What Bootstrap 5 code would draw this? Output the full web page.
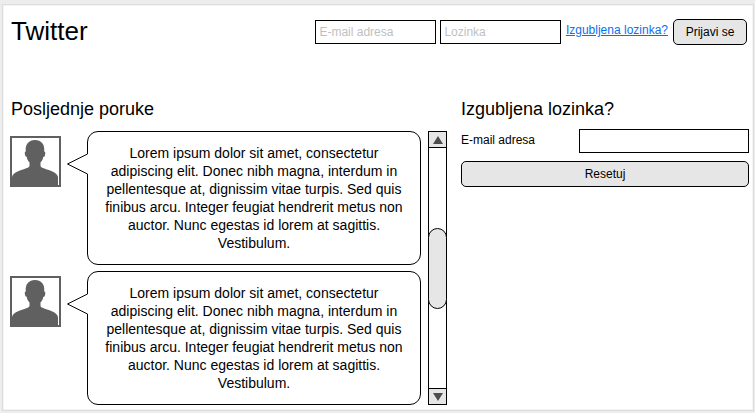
<!DOCTYPE html>
<html lang="bs">
<head>
<meta charset="utf-8">
<meta name="viewport" content="width=device-width, initial-scale=1">
<title>Twitter</title>
<link href="https://cdn.jsdelivr.net/npm/bootstrap@5.3.0/dist/css/bootstrap.min.css" rel="stylesheet">
<style>
body{font-family:"Liberation Sans",Arial,sans-serif;font-size:12px;line-height:18px;color:#000;background:#ededed;height:413px;overflow:hidden;padding:4px 1px 2px 2px}
.sheet{height:407px;background:#fff;border:1px solid #ddd;box-shadow:inset 0 0 0 1px #f4f4f4;padding:0 4px 0 7px}
.topbar{height:89px;padding-top:15px;padding-right:2px}
.brand{font-size:26px;line-height:30px;padding:0 0 0 1px;margin-top:-4px}
.field{font-size:12px;line-height:18px;height:24px;padding:2px 3.5px;border:1px solid #000;border-radius:0;box-shadow:none;color:#000}
.field::placeholder{color:#bfbfbf;opacity:1}
.login{width:121px}
.forgot{font-size:12px;color:#0a70ee;line-height:18px;margin:1px 1px 0 1px}
.key{font-size:12px;line-height:18px;height:26px;padding:3px 0;border:1px solid #000;border-radius:5px;background:#e6e6e6;color:#000}
.signin{width:74px;margin-top:-1px}
.heading{font-size:18px;line-height:22px;margin:0 0 11px 1px}
.feed{width:411px;gap:6px}
.bubble{width:334px;height:134px;border:1px solid #000;border-radius:11px;padding-top:12px;font-size:14px;line-height:18px}
.tail{position:absolute;left:-21px;top:21px}
.avatar{margin-top:5px}
.scroller{width:19px;height:274px;margin-left:7px;border:1px solid #000}
.arrow{height:16px;background:#e6e6e6}
.arrow-up{border-bottom:1px solid #000}
.arrow-down{border-top:1px solid #000}
.thumb{height:81px;margin:80px -1px 0;border:1px solid #000;border-radius:9.5px;background:#e6e6e6}
.reset{width:288px}
.side{margin-left:14px}
.side .heading{margin:0 0 9px}
.side .field{width:170px}
.caption-text{padding-bottom:2px}
</style>
</head>
<body>
<main class="sheet">
<header class="topbar d-flex align-items-start justify-content-between">
<h1 class="brand fw-normal mb-0">Twitter</h1>
<form class="d-flex align-items-start gap-1">
<input class="form-control field login" type="email" placeholder="E-mail adresa">
<input class="form-control field login" type="password" placeholder="Lozinka">
<a class="forgot text-decoration-underline text-nowrap" href="#">Izgubljena lozinka?</a>
<button class="btn key signin" type="button">Prijavi se</button>
</form>
</header>
<div class="d-flex align-items-start">
<section>
<h2 class="heading fw-normal pt-1">Posljednje poruke</h2>
<div class="d-flex">
<div class="feed d-flex flex-column">
<article class="d-flex justify-content-between align-items-start">
<svg class="avatar" width="51" height="51" viewBox="0 0 51 51"><path d="M1 1H50V50H1Z" fill="#fff" stroke="#606060" stroke-width="2"/><path d="M2 50V41C3 37 8 35 13 33.5C17 32 19.500 31.500 19.500 29.500V26.500C18 25 17 23 16.800 21C15.500 21 14.500 18.500 14.800 16.500C15 15.500 15.500 15.500 15.800 15.500C15 8 19 4 25 4C31 4 35 8 34.200 15.500C35.200 15.500 35.500 16.500 35.200 18C35 20 34.500 21 33.200 21C33 23 32 25 30.500 26.500V29.500C30.500 31.500 33 32 37 33.500C42 35 47 37 48 41V50Z" fill="#606060"/></svg>
<div class="bubble position-relative text-center"><svg class="tail" width="22" height="22" viewBox="0 0 22 22"><path d="M20 1H21V21H20Z" fill="#fff"/><path d="M20.500 1L.500 11L20.500 21" fill="#fff" stroke="#000"/></svg>Lorem ipsum dolor sit amet, consectetur<br>adipiscing elit. Donec nibh magna, interdum in<br>pellentesque at, dignissim vitae turpis. Sed quis<br>finibus arcu. Integer feugiat hendrerit metus non<br>auctor. Nunc egestas id lorem at sagittis.<br>Vestibulum.</div>
</article>
<article class="d-flex justify-content-between align-items-start">
<svg class="avatar" width="51" height="51" viewBox="0 0 51 51"><path d="M1 1H50V50H1Z" fill="#fff" stroke="#606060" stroke-width="2"/><path d="M2 50V41C3 37 8 35 13 33.5C17 32 19.500 31.500 19.500 29.500V26.500C18 25 17 23 16.800 21C15.500 21 14.500 18.500 14.800 16.500C15 15.500 15.500 15.500 15.800 15.500C15 8 19 4 25 4C31 4 35 8 34.200 15.500C35.200 15.500 35.500 16.500 35.200 18C35 20 34.500 21 33.200 21C33 23 32 25 30.500 26.500V29.500C30.500 31.500 33 32 37 33.500C42 35 47 37 48 41V50Z" fill="#606060"/></svg>
<div class="bubble position-relative text-center"><svg class="tail" width="22" height="22" viewBox="0 0 22 22"><path d="M20 1H21V21H20Z" fill="#fff"/><path d="M20.500 1L.500 11L20.500 21" fill="#fff" stroke="#000"/></svg>Lorem ipsum dolor sit amet, consectetur<br>adipiscing elit. Donec nibh magna, interdum in<br>pellentesque at, dignissim vitae turpis. Sed quis<br>finibus arcu. Integer feugiat hendrerit metus non<br>auctor. Nunc egestas id lorem at sagittis.<br>Vestibulum.</div>
</article>
</div>
<div class="scroller d-flex flex-column">
<div class="arrow arrow-up d-flex justify-content-center align-items-center"><svg width="10" height="8" viewBox="0 0 10 8"><path d="M5 0L10 8H0Z" fill="#4d4d4d"/></svg></div>
<div class="thumb"></div>
<div class="arrow arrow-down d-flex justify-content-center align-items-center mt-auto"><svg width="10" height="8" viewBox="0 0 10 8"><path d="M5 8L10 0H0Z" fill="#4d4d4d"/></svg></div>
</div>
</div>
</section>
<section class="side">
<h2 class="heading fw-normal pt-1">Izgubljena lozinka?</h2>
<form class="d-flex flex-column gap-2 reset">
<div class="d-flex justify-content-between align-items-center"><label class="caption-text" for="mail">E-mail adresa</label><input id="mail" class="form-control field" type="email"></div>
<button class="btn key w-100" type="button">Resetuj</button>
</form>
</section>
</div>
</main>
<script src="https://cdn.jsdelivr.net/npm/bootstrap@5.3.0/dist/js/bootstrap.bundle.min.js"></script>
</body>
</html>
